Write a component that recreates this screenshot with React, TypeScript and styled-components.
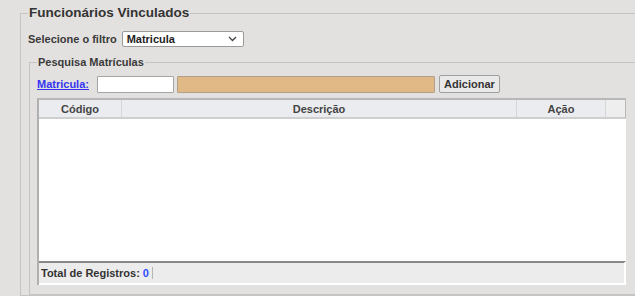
import React from "react";
import styled, { createGlobalStyle } from "styled-components";

const GlobalStyle = createGlobalStyle`
  html, body {
    margin: 0;
    padding: 0;
    overflow: hidden;
    background: #e3e1df;
    font-family: "Liberation Sans", Arial, sans-serif;
    color: #3a3a3a;
  }
`;

const Page = styled.div`
  padding: 5px 0 0 20px;
  width: 640px;
`;

const Box = styled.fieldset<{ $inner?: boolean }>`
  margin: 0;
  border: 1px solid #c6c4c2;
  padding: ${(p) => (p.$inner ? "7px 7px 9px 7px" : "10px 7px 0 7px")};
  ${(p) => (p.$inner ? "margin: 9px 0 0 1px; width: 591px;" : "")}
`;

const Legend = styled.legend<{ $big?: boolean }>`
  padding: 0 1px;
  font-weight: bold;
  font-size: ${(p) => (p.$big ? "13.5px" : "11px")};
  line-height: ${(p) => (p.$big ? "16px" : "12px")};
  color: ${(p) => (p.$big ? "#333" : "#3a3a3a")};
`;

const Row = styled.div`
  display: flex;
  align-items: center;
  gap: 3px;
  font-size: 11px;
  font-weight: bold;
`;

const Label = styled.span`
  margin-right: 2px;
`;

const Select = styled.div`
  display: flex;
  align-items: center;
  justify-content: space-between;
  box-sizing: border-box;
  width: 122px;
  height: 16px;
  padding: 0 6px 0 4px;
  background: #fff;
  border: 1px solid #9a9a9a;
  border-radius: 2px;
  color: #222;
`;

const LinkLabel = styled.a`
  color: #3535f0;
  text-decoration: underline;
  margin-right: 5px;
  cursor: pointer;
`;

const Input = styled.div<{ $w: number; $disabled?: boolean }>`
  box-sizing: border-box;
  width: ${(p) => p.$w}px;
  height: 17px;
  background: ${(p) => (p.$disabled ? "#e0b987" : "#fff")};
  border: 1px solid ${(p) => (p.$disabled ? "#b0a08a" : "#a5a5a5")};
  border-radius: 1px;
`;

const Button = styled.button`
  box-sizing: border-box;
  height: 18px;
  width: 61px;
  padding: 0;
  margin-left: 1px;
  font-family: inherit;
  font-size: 11px;
  font-weight: bold;
  color: #333;
  background: #e9e9e9;
  border: 1px solid #a0a0a0;
  border-radius: 2px;
`;

const Grid = styled.div`
  margin-top: 5px;
  width: 589px;
  height: 187px;
  display: flex;
  flex-direction: column;
  border-top: 2px solid #b8b8b8;
  border-left: 2px solid #b0b0b0;
  box-sizing: border-box;
  background: #fff;
`;

const HeadRow = styled.div`
  display: grid;
  grid-template-columns: 83px 395px 89px 1fr;
  height: 17px;
  background: #ebecef;
  border-bottom: 2px solid #cfcfcf;
  border-right: 1px solid #b8b8b8;
`;

const HeadCell = styled.div<{ $last?: boolean }>`
  display: flex;
  align-items: center;
  justify-content: center;
  font-size: 11px;
  font-weight: bold;
  color: #444;
  border-right: 1px solid ${(p) => (p.$last ? "transparent" : "#d6d6d8")};
  background: ${(p) => (p.$last ? "#eeeeee" : "transparent")};
`;

const Body = styled.div`
  flex: 1;
  background: #fff;
`;

const Footer = styled.div`
  height: 20px;
  display: flex;
  align-items: center;
  padding-left: 2px;
  background: #ececec;
  border-top: 2px solid #888;
  border-bottom: 2px solid #fff;
  border-right: 2px solid #fff;
  font-size: 11px;
  font-weight: bold;
  color: #333;
`;

const Count = styled.span`
  color: #2f4fff;
  margin-left: 3px;
  padding-right: 3px;
  border-right: 1px solid #b5b5b5;
`;

const Chevron = () => (
  <svg width="9" height="6" viewBox="0 0 9 6">
    <path d="M1 1l3.5 3.5L8 1" fill="none" stroke="#444" strokeWidth="1.3" />
  </svg>
);

export default function App() {
  return (
    <>
      <GlobalStyle />
      <Page>
        <Box>
          <Legend $big>Funcionários Vinculados</Legend>
          <Row>
            <Label>Selecione o filtro</Label>
            <Select>
              <span>Matricula</span>
              <Chevron />
            </Select>
          </Row>
          <Box $inner>
            <Legend>Pesquisa Matrículas</Legend>
            <Row>
              <LinkLabel>Matricula:</LinkLabel>
              <Input $w={77} />
              <Input $w={258} $disabled />
              <Button>Adicionar</Button>
            </Row>
            <Grid>
              <HeadRow>
                <HeadCell>Código</HeadCell>
                <HeadCell>Descrição</HeadCell>
                <HeadCell>Ação</HeadCell>
                <HeadCell $last />
              </HeadRow>
              <Body />
              <Footer>
                Total de Registros:<Count>0</Count>
              </Footer>
            </Grid>
          </Box>
        </Box>
      </Page>
    </>
  );
}
